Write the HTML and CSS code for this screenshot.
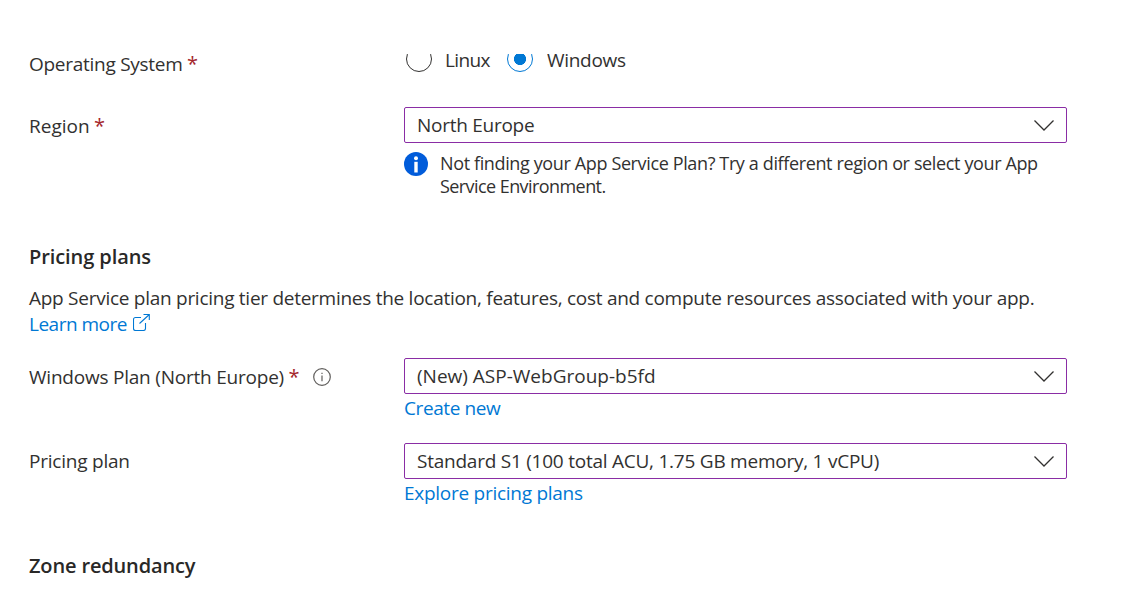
FILE: index.html
```html
<!DOCTYPE html>
<html lang="en">
<head>
<meta charset="utf-8">
<title>App Service plan</title>
<link rel="stylesheet" href="styles.css">
</head>
<body>
<main class="form">
  <div class="row row-os">
    <div class="label"><span>Operating System</span><span class="required">*</span></div>
    <div class="radios">
      <div class="radio-list">
        <span class="radio"></span><span class="radio-text">Linux</span>
        <span class="radio checked"></span><span class="radio-text t-windows">Windows</span>
      </div>
    </div>
  </div>
  <div class="row row-region">
    <div class="label"><span class="t-region">Region</span><span class="required">*</span></div>
    <div class="control">
      <div class="select"><span>North Europe</span><svg class="chevron" viewBox="0 0 20 12"><path d="M.5 1.500 10 11 19.500 1.500"/></svg></div>
      <div class="notice">
        <svg class="notice-icon" viewBox="0 0 24 24"><circle cx="12" cy="12" r="12"/><circle class="mark" cx="12" cy="6.2" r="2"/><path class="mark" d="M10.3 9.8h3.4v10.7h-3.4z"/></svg>
        <p><span>Not finding your App Service Plan? Try a different region or select your App</span><br><span class="t-env">Service Environment.</span></p>
      </div>
    </div>
  </div>
  <h2>Pricing plans</h2>
  <p class="intro">App Service plan pricing tier determines the location, features, cost and compute resources associated with your app.</p>
  <a class="link"><span class="t-learn">Learn more</span><svg class="external" viewBox="0 0 17 17"><path d="M8 3.5H2.500A2 2 0 0 0 .5 5.500V14.500a2 2 0 0 0 2 2H10.500a2 2 0 0 0 2-2V9M6.500 9.500 15.800 1M10.500.5H16.300V6"/></svg></a>
  <div class="row row-plan">
    <div class="label"><span class="t-plan">Windows Plan (North Europe)</span><span class="required">*</span><svg class="info" viewBox="0 0 18 18"><circle cx="9" cy="9" r="8.300"/><path d="M9 7.500V13.300M9 4.700V6.100"/></svg></div>
    <div class="control">
      <div class="select"><span class="t-asp">(New) ASP-WebGroup-b5fd</span><svg class="chevron" viewBox="0 0 20 12"><path d="M.5 1.500 10 11 19.500 1.500"/></svg></div>
      <a class="link below"><span class="t-create">Create new</span></a>
    </div>
  </div>
  <div class="row row-pricing">
    <div class="label"><span class="t-plan">Pricing plan</span></div>
    <div class="control">
      <div class="select"><span class="t-standard">Standard S1 (100 total ACU, 1.75 GB memory, 1 vCPU)</span><svg class="chevron" viewBox="0 0 20 12"><path d="M.5 1.500 10 11 19.500 1.500"/></svg></div>
      <a class="link below"><span>Explore pricing plans</span></a>
    </div>
  </div>
  <h2 class="t-zone">Zone redundancy</h2>
</main>
</body>
</html>
```
FILE: styles.css
```css
* { box-sizing: border-box; }
body {
  margin: 0;
  height: 589px;
  overflow: hidden;
  background: #fff;
  color: #323130;
  font: 19px/26px "Open Sans", "Noto Sans", sans-serif;
  letter-spacing: -0.27px;
}
p, h2 { margin: 0; }
.form { padding: 51px 69px 0 29px; }
.row { display: flex; }
.row-os { height: 56px; }
.row-region { height: 137px; }
.row-plan { height: 85px; margin-top: 21px; }
.row-pricing { height: 109px; }
.label { flex: none; width: 375px; display: flex; white-space: nowrap; }
.row-region .label, .row-plan .label { padding-top: 6px; }
.row-pricing .label { padding-top: 5px; }
.required { width: 10px; color: #a4262c; margin-left: 4.5px; font-size: 20px; font-weight: 500; }
.radios { height: 30px; margin-top: 3px; padding-left: 2px; overflow: hidden; }
.radio-list { display: flex; align-items: center; height: 26px; margin-top: -8px; white-space: nowrap; }
.radio { flex: none; width: 26px; height: 26px; border: 1px solid #323130; border-radius: 50%; }
.radio-text { width: 62px; margin-left: 13px; padding-top: 2px; letter-spacing: -0.6px; clip-path: inset(9px 0 0 0); }
.radio.checked { border-color: #0078d4; background: radial-gradient(circle, #0078d4 5.7px, transparent 6.4px); }
.radio-text.t-windows { width: 90px; margin-left: 14px; letter-spacing: -0.3px; }
.control { width: 663px; }
.select {
  display: flex;
  align-items: center;
  justify-content: space-between;
  height: 36px;
  padding: 0 12px;
  border: 1px solid #8a2da5;
  border-radius: 2px;
  white-space: nowrap;
}
.chevron { width: 20px; height: 12px; fill: none; stroke: #323130; stroke-width: 1.3; }
.notice { display: flex; gap: 12px; margin-top: 9px; font-size: 18px; line-height: 23px; letter-spacing: -0.37px; white-space: nowrap; }
.notice-icon { flex: none; width: 24px; height: 24px; fill: #015cda; }
.notice-icon .mark { fill: #fff; }
h2 { font-size: 20px; line-height: 26px; font-weight: 600; letter-spacing: -0.08px; color: #292827; }
.intro { margin-top: 15px; white-space: nowrap; }
.link { display: flex; align-items: center; height: 26px; color: #0078d4; }
.external { width: 17px; height: 17px; margin-left: 6px; margin-top: -3px; fill: none; stroke: #0078d4; stroke-width: 1.1; }
.info { width: 18px; height: 18px; margin: 4px 0 0 15px; fill: none; stroke: #605e5c; stroke-width: 1.2; }
.below { margin-top: 1px; }
.row-pricing + h2 { margin-top: 1px; }
/* Per-label tracking */
.t-region, .t-asp { letter-spacing: 0; }
.t-plan { letter-spacing: -0.22px; }
.t-standard { letter-spacing: -0.24px; }
.t-env { letter-spacing: -0.57px; }
.t-learn { letter-spacing: -0.5px; }
.t-create { letter-spacing: -0.4px; }
.t-zone { letter-spacing: -0.15px; }
```
